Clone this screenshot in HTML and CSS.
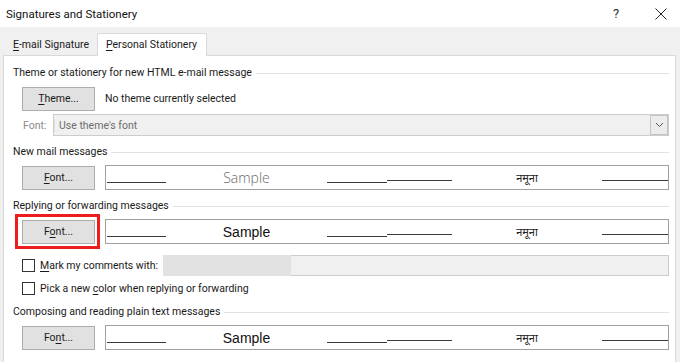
FILE: index.html
```html
<!DOCTYPE html>
<html>
<head>
<meta charset="utf-8">
<link rel="stylesheet" href="styles.css">
</head>
<body>
<div class="window">
  <div class="titlebar">
    <span class="title">Signatures and Stationery</span>
    <span class="help">?</span>
    <svg class="close" width="12" height="12" viewBox="0 0 12 12"><path d="M0.5 0.5 L11.5 11.5 M11.5 0.5 L0.5 11.5" stroke="#222" stroke-width="1"/></svg>
  </div>
  <div class="tabstrip">
    <div class="tab"><u>E</u>-mail Signature</div>
    <div class="tab active"><u>P</u>ersonal Stationery</div>
  </div>
  <div class="panel">
    <div class="group-head"><span>Theme or stationery for new HTML e-mail message</span><i class="rule"></i></div>
    <div class="row theme-row">
      <button class="btn"><u>T</u>heme...</button>
      <span class="status">No theme currently selected</span>
    </div>
    <div class="row font-row">
      <span class="muted-label">Font:</span>
      <div class="select">
        <span class="select-text">Use theme's font</span>
        <span class="select-arrow"><svg width="9" height="6" viewBox="0 0 9 6"><path d="M1 1 L4.5 4.5 L8 1" fill="none" stroke="#555" stroke-width="1"/></svg></span>
      </div>
    </div>

    <div class="group-head g2"><span>New mail messages</span><i class="rule"></i></div>
    <div class="row sample-row">
      <button class="btn"><u>F</u>ont...</button>
      <div class="sample">
        <i class="ln l1"></i><span class="txt t1 light">Sample</span><i class="ln l2"></i><i class="ln l3"></i><span class="txt t2 deva">नमूना</span><i class="ln l4"></i>
      </div>
    </div>

    <div class="group-head g3"><span>Replying or forwarding messages</span><i class="rule"></i></div>
    <div class="row sample-row">
      <div class="highlight-wrap">
        <button class="btn">F<u>o</u>nt...</button>
        <span class="highlight"></span>
      </div>
      <div class="sample">
        <i class="ln l1"></i><span class="txt t1 bold">Sample</span><i class="ln l2"></i><i class="ln l3"></i><span class="txt t2 deva">नमूना</span><i class="ln l4"></i>
      </div>
    </div>

    <div class="row check-row c1">
      <span class="checkbox"></span>
      <span class="check-label"><u>M</u>ark my comments with:</span>
      <div class="comment-field"><span class="comment-fill"></span></div>
    </div>
    <div class="row check-row c2">
      <span class="checkbox"></span>
      <span class="check-label">Pick a new <u>c</u>olor when replying or forwarding</span>
    </div>

    <div class="group-head g4"><span>Composing and reading plain text messages</span><i class="rule"></i></div>
    <div class="row sample-row">
      <button class="btn">Fo<u>n</u>t...</button>
      <div class="sample">
        <i class="ln l1"></i><span class="txt t1 bold">Sample</span><i class="ln l2"></i><i class="ln l3"></i><span class="txt t2 deva">नमूना</span><i class="ln l4"></i>
      </div>
    </div>
  </div>
</div>
</body>
</html>
```
FILE: styles.css
```css
* { box-sizing: border-box; }
html, body { margin: 0; padding: 0; }
body {
  width: 680px;
  height: 362px;
  overflow: hidden;
  background: #f0f0f0;
  font-family: Roboto, "Noto Sans", sans-serif;
  font-size: 10.5px;
  color: #1a1a1a;
}
u { text-decoration: underline; text-underline-offset: 2px; }
.window { display: flex; flex-direction: column; height: 362px; }

.titlebar {
  height: 27px;
  background: #fff;
  display: flex;
  align-items: center;
  padding-left: 6px;
  flex-shrink: 0;
}
.title { font-size: 11.5px; color: #111; flex: 1; }
.help { font-size: 13px; color: #333; width: 14px; margin-right: 28px; }
.close { margin-right: 13px; }

.tabstrip {
  height: 28px;
  display: flex;
  align-items: flex-end;
  padding-left: 8px;
  flex-shrink: 0;
}
.tab {
  height: 20px;
  line-height: 19px;
  padding: 0 6px 0 5px;
  color: #1a1a1a;
  white-space: nowrap;
}
.tab.active {
  height: 23px;
  line-height: 21px;
  background: #fff;
  border: 1px solid #d9d9d9;
  border-bottom: none;
  padding: 0 9px 0 8px;
  margin-left: 2px;
  margin-bottom: -1px;
  position: relative;
  z-index: 1;
}

.panel {
  flex: 1;
  margin: 0 4px 0 3px;
  background: #fff;
  border: 1px solid #d9d9d9;
  border-bottom: none;
  padding: 9px 6px 0 9px;
  display: flex;
  flex-direction: column;
}

.group-head {
  display: flex;
  align-items: center;
  height: 16px;
  line-height: 16px;
  color: #1a1a1a;
  white-space: nowrap;
}
.group-head .rule {
  flex: 1;
  height: 1px;
  background: #e3e3e3;
  margin-left: 4px;
}
.g2, .g3, .g4 { margin-top: 8px; }

.row { display: flex; align-items: center; padding-left: 9px; white-space: nowrap; }
.theme-row { margin-top: 6px; height: 23px; }
.font-row { margin-top: 4px; height: 22px; padding-left: 10px; }
.sample-row { margin-top: 5px; height: 25px; }
.c1 { margin-top: 11px; height: 21px; }
.c2 { margin-top: 4px; height: 16px; }

.btn {
  width: 73px;
  height: 24px;
  background: #e1e1e1;
  border: 1px solid #adadad;
  font-family: inherit;
  font-size: 10.5px;
  color: #1a1a1a;
  padding: 0;
  margin: 0;
}
.status { margin-left: 10px; }

.muted-label { color: #8a8a8a; width: 30px; }
.select {
  flex: 1;
  height: 22px;
  background: #f0f0f0;
  border: 1px solid #cccccc;
  display: flex;
  align-items: center;
}
.select-text { flex: 1; color: #6d6d6d; padding-left: 4px; border-left: 1px solid #e0e0e0; }
.select-arrow {
  width: 18px;
  height: 20px;
  border: 1px solid #c4c4c4;
  background: #ececec;
  display: flex;
  align-items: center;
  justify-content: center;
}

.sample {
  flex: 1;
  height: 25px;
  margin-left: 10px;
  border: 1px solid #a0a0a0;
  display: flex;
  align-items: center;
  padding-left: 1px;
}
.ln { display: block; height: 1px; background: #3a3a3a; align-self: flex-end; }
.l1 { width: 59px; margin-bottom: 6px; }
.l2 { width: 60px; margin-bottom: 6px; }
.l3 { width: 65px; margin-bottom: 8px; }
.l4 { flex: 1; margin-bottom: 8px; }
.txt { display: block; text-align: center; }
.t1 { width: 161px; }
.t2 { width: 150px; }
.light { font-family: "Open Sans", sans-serif; font-weight: 300; font-size: 14px; color: #6a6a6a; }
.bold { font-family: "Liberation Sans", Arial, sans-serif; font-size: 14px; color: #111; }
.deva { font-size: 11px; color: #222; }

.highlight-wrap { position: relative; display: flex; }
.highlight {
  position: absolute;
  left: -7px;
  top: -6px;
  right: -5px;
  bottom: -5px;
  border: 3px solid #ee1c1c;
}

.checkbox {
  width: 13px;
  height: 13px;
  border: 1px solid #333;
  background: #fff;
  flex-shrink: 0;
}
.check-label { margin-left: 5px; }
.c1 .check-label { width: 123px; }
.comment-field {
  flex: 1;
  height: 21px;
  background: #f0f0f0;
  border: 1px solid #cccccc;
  display: flex;
}
.comment-fill { width: 128px; background: #e2e2e2; margin: -1px 0 -1px -1px; }
```
